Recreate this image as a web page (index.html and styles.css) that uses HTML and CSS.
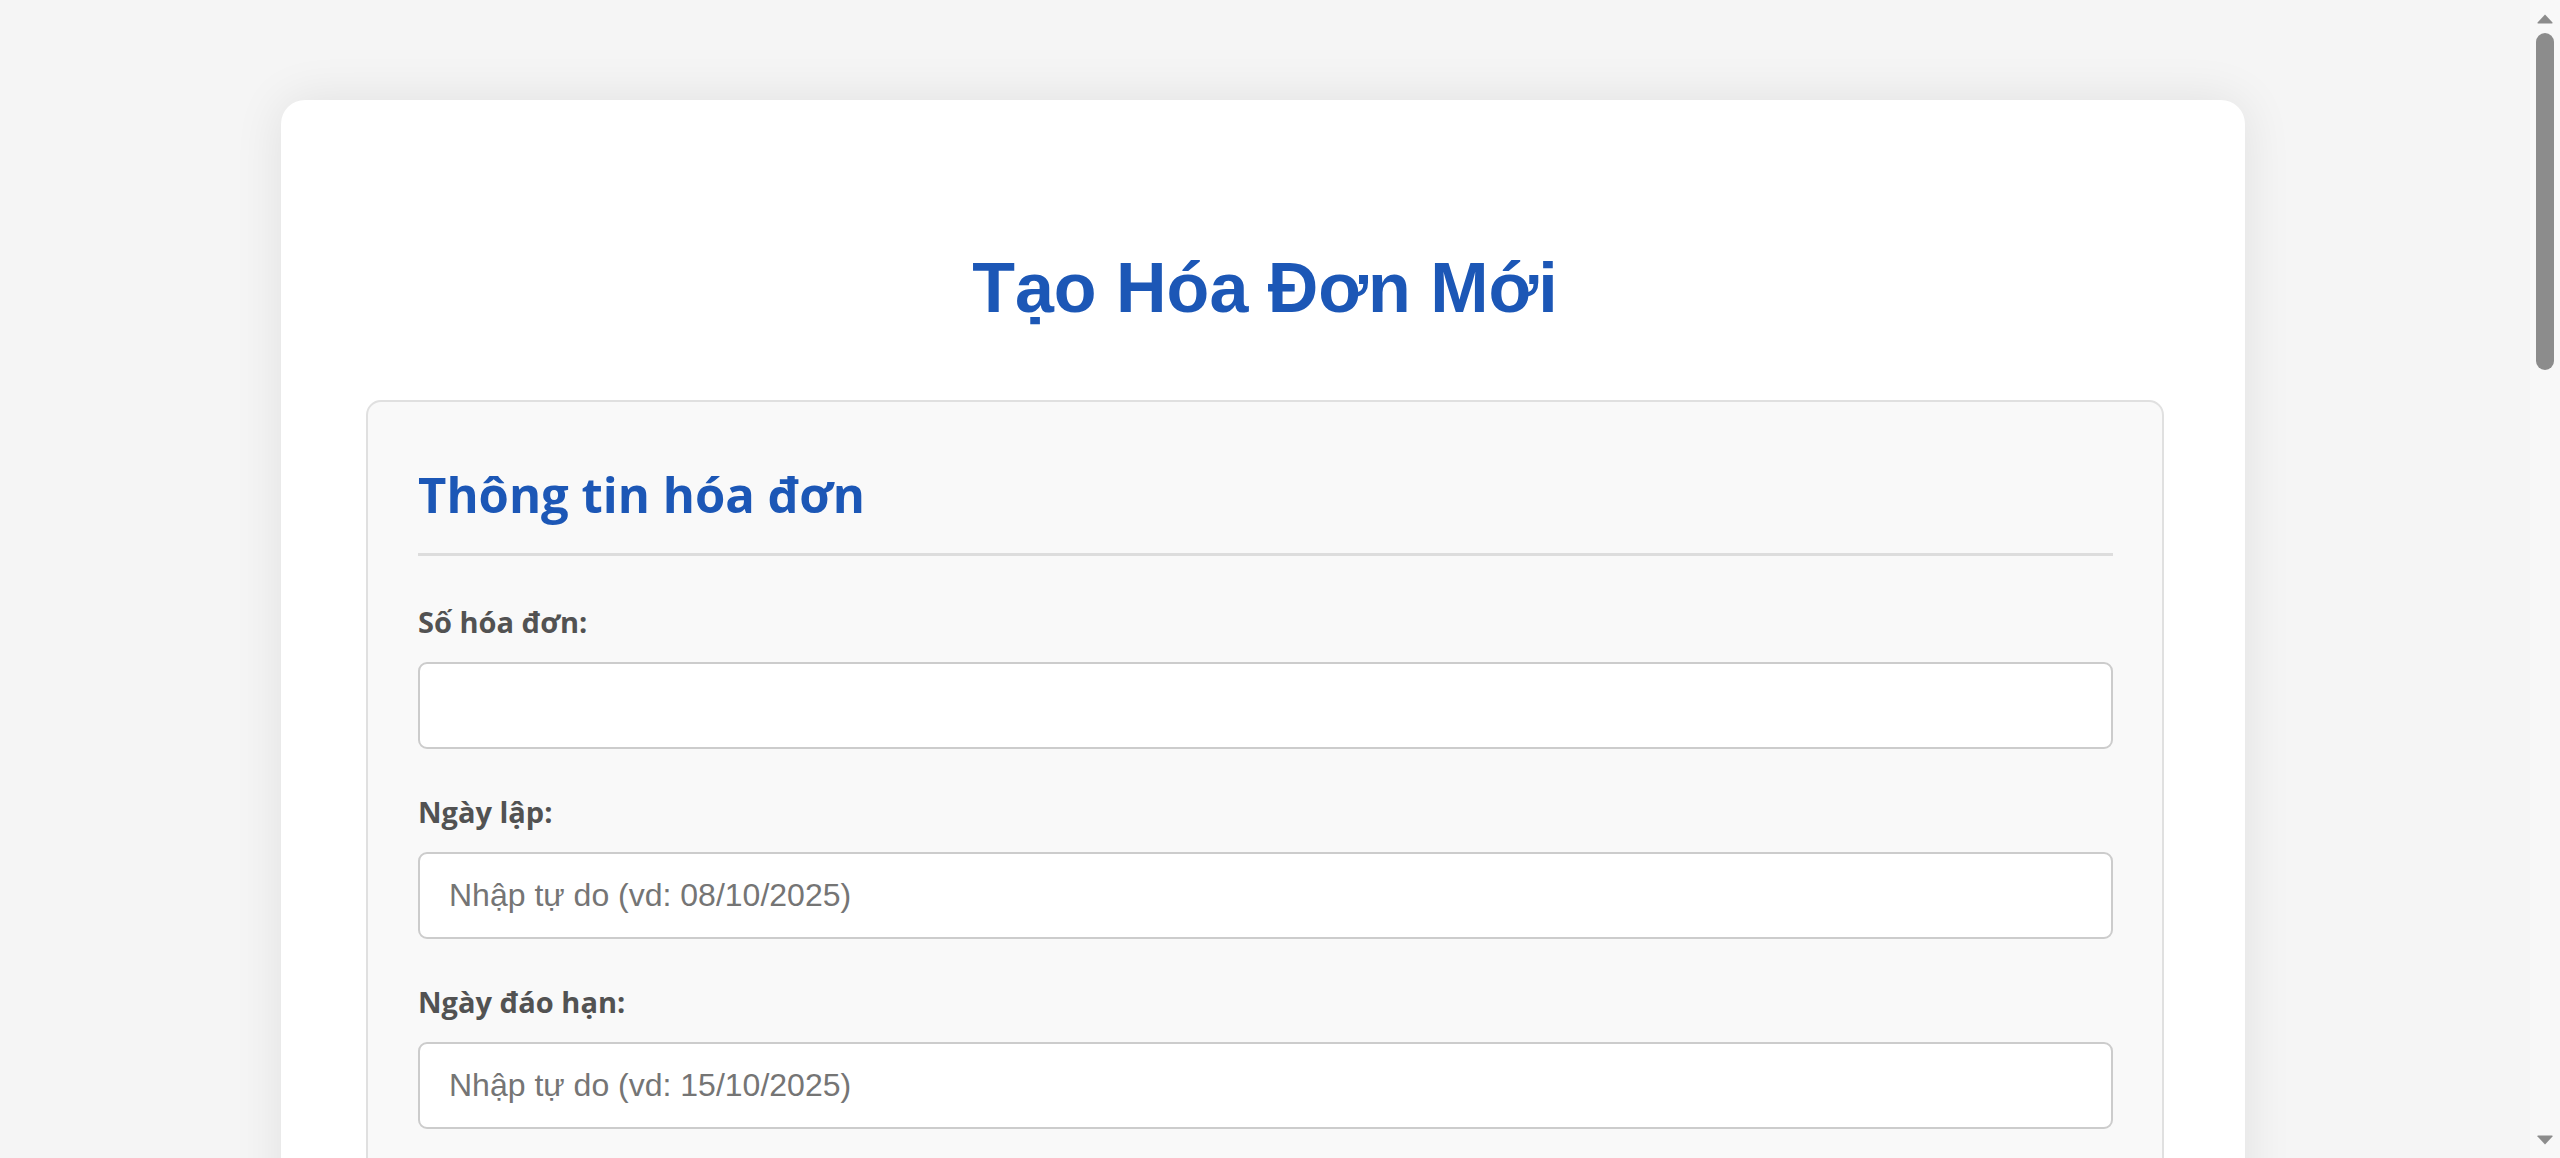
FILE: index.html
```html
<!DOCTYPE html>
<html lang="vi">
<head>
<meta charset="utf-8">
<title>Tạo Hóa Đơn Mới</title>
<link rel="stylesheet" href="styles.css">
</head>
<body>
<div class="page">
  <main class="card">
    <h1 class="title">Tạo Hóa Đơn Mới</h1>
    <section class="section">
      <h2 class="section-title">Thông tin hóa đơn</h2>
      <div class="field">
        <label class="label" for="so">Số hóa đơn:</label>
        <input class="input" id="so" type="text">
      </div>
      <div class="field">
        <label class="label" for="ngaylap">Ngày lập:</label>
        <input class="input" id="ngaylap" type="text" placeholder="Nhập tự do (vd: 08/10/2025)">
      </div>
      <div class="field">
        <label class="label" for="daohan">Ngày đáo hạn:</label>
        <input class="input" id="daohan" type="text" placeholder="Nhập tự do (vd: 15/10/2025)">
      </div>
    </section>
  </main>
</div>
<div class="scrollbar" aria-hidden="true">
  <svg class="scroll-arrow scroll-arrow-up" width="18" height="11" viewBox="0 0 18 11">
    <path d="M9 1.5 L16.5 9.5 Q17 10.5 15.8 10.5 L2.2 10.5 Q1 10.5 1.5 9.5 Z" fill="#8c8c8c"/>
  </svg>
  <div class="scroll-thumb"></div>
  <svg class="scroll-arrow scroll-arrow-down" width="18" height="11" viewBox="0 0 18 11">
    <path d="M9 9.5 L16.5 1.5 Q17 0.5 15.8 0.5 L2.2 0.5 Q1 0.5 1.5 1.5 Z" fill="#8c8c8c"/>
  </svg>
</div>
</body>
</html>
```
FILE: styles.css
```css
* { box-sizing: border-box; }

html, body {
  margin: 0;
  padding: 0;
  background: #f5f5f5;
}

html::-webkit-scrollbar {
  width: 0;
  height: 0;
}

.page {
  padding: 100px 34px 100px 0;
}

.card {
  width: 1964px;
  min-height: 3507px;
  margin: 0 auto;
  padding: 148px 81px 100px 85px;
  background: #ffffff;
  border-radius: 24px;
  box-shadow: 0 0 50px rgba(0, 0, 0, 0.09);
}

.title {
  margin: 0 0 72px;
  font-family: "Liberation Sans", Arial, sans-serif;
  font-weight: 700;
  font-size: 70px;
  line-height: 80px;
  text-align: center;
  color: #1c57b6;
}

.section {
  background: #f9f9f9;
  border: 2px solid #e0e0e0;
  border-radius: 15px;
  padding: 62px 49px 40px 50px;
}

.section-title {
  margin: 0 0 47px;
  padding-bottom: 29px;
  border-bottom: 3px solid #dddddd;
  font-family: "Open Sans", "Noto Sans", sans-serif;
  font-weight: 700;
  font-size: 49px;
  line-height: 60px;
  color: #1c57b6;
}

.field {
  display: flex;
  flex-direction: column;
  margin-bottom: 44px;
}

.label {
  display: block;
  margin-bottom: 21px;
  font-family: "Open Sans", "Noto Sans", sans-serif;
  font-weight: 700;
  font-size: 29px;
  line-height: 38px;
  color: #525252;
}

.input {
  display: block;
  width: 100%;
  height: 87px;
  padding: 0 29px;
  background: #ffffff;
  border: 2px solid #cccccc;
  border-radius: 9px;
  font-family: "Liberation Sans", Arial, sans-serif;
  font-size: 32px;
  color: #222222;
  outline: none;
}

.input::placeholder {
  color: #757575;
}

/* overlay drawing of the window's vertical scrollbar */
.scrollbar {
  position: fixed;
  top: 0;
  right: 0;
  width: 30px;
  height: 100vh;
  background: #f8f8f8;
}

.scroll-thumb {
  position: absolute;
  left: 6px;
  top: 33px;
  width: 18px;
  height: 337px;
  border-radius: 9px;
  background: #8c8c8c;
}

.scroll-arrow {
  position: absolute;
  left: 6px;
  display: block;
}

.scroll-arrow-up {
  top: 13px;
}

.scroll-arrow-down {
  bottom: 12px;
}
```
